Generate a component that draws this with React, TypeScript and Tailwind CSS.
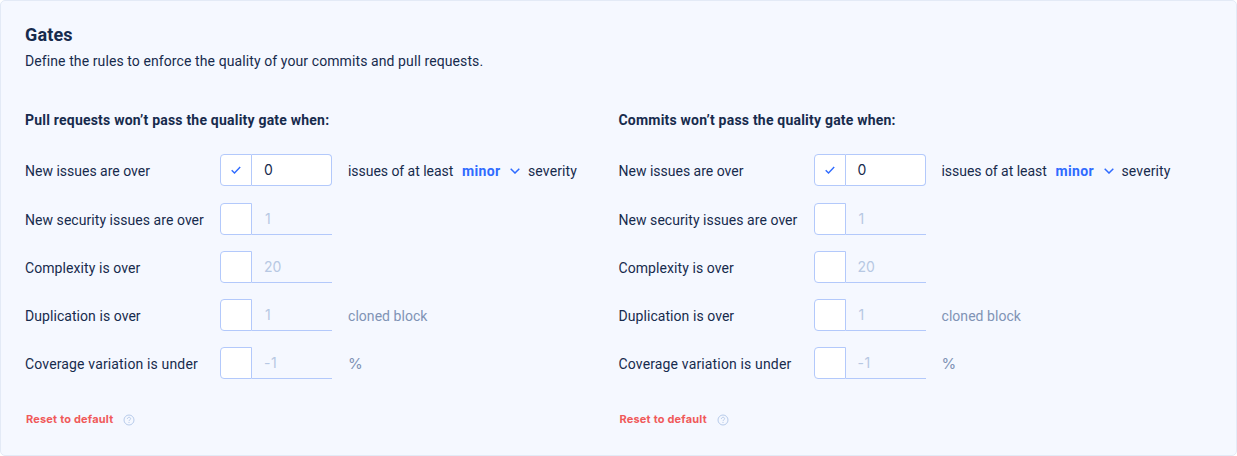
type Rule = {
  label: string;
  tracking: string;
  value: string;
  checked?: boolean;
  suffix?: string;
};

const rules: Rule[] = [
  { label: "New issues are over", tracking: "tracking-[0px]", value: "0", checked: true },
  { label: "New security issues are over", tracking: "tracking-[0.05px]", value: "1" },
  { label: "Complexity is over", tracking: "tracking-[0.08px]", value: "20" },
  { label: "Duplication is over", tracking: "tracking-[0.06px]", value: "1", suffix: "cloned block" },
  { label: "Coverage variation is under", tracking: "tracking-[0.15px]", value: "-1", suffix: "%" },
];

function ThresholdField({ value, checked }: { value: string; checked?: boolean }) {
  return (
    <div className="flex h-8 w-28 shrink-0">
      <div className="flex w-8 items-center justify-center rounded-l-[4px] border border-[#b3c9fb] bg-white">
        {checked && (
          <svg width="10" height="8" viewBox="0 0 10 8" fill="none" stroke="#2f6bff" strokeWidth="1.4">
            <path d="M0.7 4.2L3.5 6.9L9.2 0.9" />
          </svg>
        )}
      </div>
      <div
        className={
          checked
            ? "flex w-20 items-center rounded-r-[4px] border border-l-0 border-[#b3c9fb] bg-white pl-3 font-['Inter',sans-serif] text-sm text-[#172b4d]"
            : "flex w-20 items-center border-b border-[#b3c9fb] pl-3 font-['Inter',sans-serif] text-sm text-[#b7c8e3]"
        }
      >
        <span className={value === "1" ? "pl-px" : value === "-1" ? "tracking-[0.5px]" : ""}>{value}</span>
      </div>
    </div>
  );
}

function RuleRow({ rule }: { rule: Rule }) {
  return (
    <div className="flex h-8 items-center">
      <div className={`w-[195px] shrink-0 whitespace-nowrap pt-0.5 ${rule.tracking}`}>{rule.label}</div>
      <ThresholdField value={rule.value} checked={rule.checked} />
      {rule.checked && (
        <div className="flex items-center whitespace-nowrap pl-4 pt-0.5">
          <span className="w-[114px] tracking-[-0.04px]">issues of at least</span>
          <span className="w-[48px] font-bold tracking-[0.35px] text-[#2f6bff]">minor</span>
          <svg className="mr-2" width="10" height="6" viewBox="0 0 10 6" fill="none" stroke="#2f6bff" strokeWidth="1.5">
            <path d="M0.7 0.7L5 5L9.3 0.7" />
          </svg>
          <span className="tracking-[0.13px]">severity</span>
        </div>
      )}
      {rule.suffix && (
        <div
          className={
            rule.suffix === "%"
              ? "pl-4 pt-0.5 font-['Inter',sans-serif] text-[15px] text-[#8093b5]"
              : "whitespace-nowrap pl-4 pt-0.5 tracking-[0.05px] text-[#8093b5]"
          }
        >
          {rule.suffix}
        </div>
      )}
    </div>
  );
}

function GateColumn({ title }: { title: string }) {
  return (
    <section className="w-[593.5px] shrink-0">
      <h3 className="text-sm leading-5 font-bold tracking-[0.21px]">{title}</h3>
      <div className="mt-[24px] flex flex-col gap-4">
        {rules.map((rule) => (
          <div key={rule.label} className="first:mb-px">
            <RuleRow rule={rule} />
          </div>
        ))}
      </div>
      <div className="mt-[31px] flex h-5 items-center pl-px">
        <button className="w-[97px] text-left font-['Inter',sans-serif] text-[11px] font-bold tracking-[0.19px] whitespace-nowrap text-[#f05a5a]">
          Reset to default
        </button>
        <svg width="12" height="12" viewBox="0 0 12 12" fill="none" stroke="#b7cbea">
          <circle cx="6" cy="6" r="5" strokeWidth="1" />
          <path d="M4.4 4.9C4.4 2.8 7.6 2.8 7.6 4.7C7.6 5.9 6 5.8 6 7.1M6 8V9" strokeWidth="1" />
        </svg>
      </div>
    </section>
  );
}

export default function App() {
  return (
    <main className="h-[456px] w-full overflow-hidden rounded-[5px] border border-[#e3eaf6] bg-[#f5f8ff] pt-[22px] pl-6 font-['Roboto',sans-serif] text-sm text-[#172b4d]">
      <h2 className="text-lg leading-6 font-bold tracking-[0.15px]">Gates</h2>
      <p className="mt-1 leading-5 tracking-[0.095px]">
        Define the rules to enforce the quality of your commits and pull requests.
      </p>
      <div className="mt-[39px] flex">
        <GateColumn title="Pull requests won’t pass the quality gate when:" />
        <GateColumn title="Commits won’t pass the quality gate when:" />
      </div>
    </main>
  );
}
